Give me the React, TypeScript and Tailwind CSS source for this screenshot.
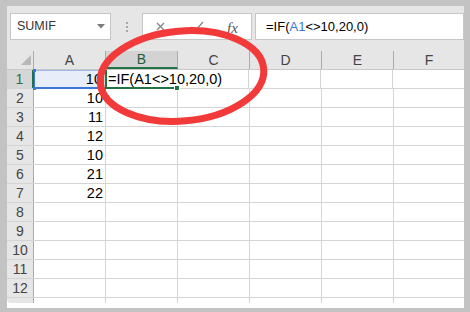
import React from "react";

const COLS = ["A", "B", "C", "D", "E", "F"];
const WIDTHS = [72, 72, 72, 72, 72, 70];
const VALUES = ["10", "10", "11", "12", "10", "21", "22", "", "", "", "", ""];

function HeaderRow() {
  return (
    <div className="flex h-[19px] bg-[#e6e6e6] border-b border-[#c8c8c8]">
      <div className="w-[27px] shrink-0 border-r border-[#ababab] relative">
        <svg className="absolute left-0 top-0" width="27" height="19" viewBox="0 0 27 19">
          <polygon points="14,14 24,14 24,4" fill="#b8b8b8" />
        </svg>
      </div>
      {COLS.map((c, i) => (
        <div
          key={c}
          style={{ width: WIDTHS[i] }}
          className={
            c === "B"
              ? "shrink-0 flex items-center justify-center bg-[#d3d3d3] border-r border-[#ababab] border-b-2 border-b-[#217346] text-[#1d5e38] text-[14px] leading-none"
              : "shrink-0 flex items-center justify-center border-r border-[#ababab] text-[#444] text-[14px] leading-none last:border-r-0"
          }
        >
          {c}
        </div>
      ))}
    </div>
  );
}

function Row({ n }: { n: number }) {
  const first = n === 1;
  return (
    <div className="flex h-[19px] border-b border-[#d4d4d4]">
      <div
        className={
          first
            ? "w-[27px] shrink-0 flex items-center justify-center bg-[#d6d6d6] border-r-2 border-[#217346] text-[#217346] text-[14px] leading-none"
            : "w-[27px] shrink-0 flex items-center justify-center bg-[#e6e6e6] border-r border-[#ababab] text-[#444] text-[14px] leading-none"
        }
      >
        {n}
      </div>
      {COLS.map((c, i) => {
        if (first && c === "A") {
          return (
            <div
              key={c}
              style={{ width: WIDTHS[i] - 1 }}
              className="shrink-0 relative bg-[#e8eef9] border-r border-[#d4d4d4] flex items-center justify-end pr-[2px] text-[14.5px] text-black leading-none"
            >
              <div className="absolute left-0 top-0 right-0 bottom-[-1px] border border-[#3d78d6] border-b-2 border-t-[#9db8e6]" />
              <div className="absolute left-[-1px] top-[-1px] w-[3px] h-[3px] bg-[#3d78d6]" />
              <div className="absolute right-[-2px] top-[-1px] w-[3px] h-[3px] bg-[#3d78d6]" />
              <div className="absolute left-[-1px] bottom-[-2px] w-[3px] h-[3px] bg-[#3d78d6]" />
              <div className="absolute right-[-2px] bottom-[-2px] w-[3px] h-[3px] bg-[#3d78d6]" />
              <span className="relative">{VALUES[0]}</span>
            </div>
          );
        }
        if (first && c === "B") {
          return (
            <div
              key={c}
              style={{ width: WIDTHS[i] }}
              className="shrink-0 relative flex items-center pl-[3px] text-[14.5px] text-black leading-none whitespace-nowrap"
            >
              <div className="absolute left-0 top-0 right-[-1px] bottom-[-1px] border-l-2 border-b-2 border-[#217346]" />
              <div className="absolute right-[-3px] bottom-[-3px] w-[6px] h-[6px] bg-[#217346] border border-white" />
              <span className="relative">=IF(A1&lt;&gt;10,20,0)</span>
            </div>
          );
        }
        return (
          <div
            key={c}
            style={{ width: WIDTHS[i] }}
            className="shrink-0 border-r border-[#d4d4d4] last:border-r-0 flex items-center justify-end pr-[2px] text-[14.5px] text-black leading-none"
          >
            {c === "A" ? VALUES[n - 1] : ""}
          </div>
        );
      })}
    </div>
  );
}

export default function App() {
  return (
    <div
      className="relative w-[470px] h-[312px] bg-[#c3c3c3] pl-[7px] pt-[6px] pr-[6px] pb-[4px] overflow-hidden"
      style={{ fontFamily: '"Liberation Sans", Arial, sans-serif' }}
    >
      <div className="w-full h-full bg-white flex flex-col">
        {/* toolbar */}
        <div className="h-[45px] bg-[#e6e6e6] flex items-start pt-[7px] pl-[3px] shrink-0">
          <div className="w-[101px] h-[27px] bg-white border border-[#c6c6c6] flex items-center justify-between pl-[6px] pr-[5px]">
            <span className="text-[12.5px] text-[#333]">SUMIF</span>
            <svg width="8" height="5" viewBox="0 0 8 5">
              <polygon points="0,0 8,0 4,4.5" fill="#7a7a7a" />
            </svg>
          </div>
          <div className="w-[31px] h-[27px] flex flex-col items-center justify-center gap-[2px]">
            <div className="w-[2px] h-[2px] bg-[#a8a8a8]" />
            <div className="w-[2px] h-[2px] bg-[#a8a8a8]" />
            <div className="w-[2px] h-[2px] bg-[#a8a8a8]" />
          </div>
          <div className="w-[110px] h-[27px] bg-white border border-[#c6c6c6] relative flex items-center">
            <svg className="absolute left-0 top-0" width="108" height="25" viewBox="0 0 108 25">
              <line x1="14" y1="9" x2="21" y2="16" stroke="#8a8a8a" strokeWidth="1.4" />
              <line x1="21" y1="9" x2="14" y2="16" stroke="#8a8a8a" strokeWidth="1.4" />
              <polyline points="48,13 52,17 60,8" fill="none" stroke="#8a8a8a" strokeWidth="1.4" />
            </svg>
            <span
              className="absolute left-[84px] top-[3px] text-[15px] italic text-[#555]"
              style={{ fontFamily: '"Liberation Serif", "Times New Roman", serif' }}
            >
              fx
            </span>
          </div>
          <div className="flex-1 ml-[3px] h-[27px] bg-white border border-[#c6c6c6] flex items-center pl-[10px] text-[13px] text-black">
            <span>=IF(</span>
            <span className="text-[#3a78d6]">A1</span>
            <span>&lt;&gt;10,20,0)</span>
          </div>
        </div>
        {/* grid */}
        <HeaderRow />
        {Array.from({ length: 12 }, (_, i) => (
          <Row key={i} n={i + 1} />
        ))}
        <div className="flex h-[5px]">
          <div className="w-[27px] shrink-0 bg-[#e6e6e6] border-r border-[#ababab] rounded-bl-[4px]" />
          {WIDTHS.map((w, i) => (
            <div key={i} style={{ width: w }} className="shrink-0 border-r border-[#d4d4d4] last:border-r-0" />
          ))}
        </div>
      </div>
      {/* red hand-drawn circle */}
      <svg className="absolute left-0 top-0 pointer-events-none" width="470" height="312" viewBox="0 0 470 312">
        <ellipse
          cx="182"
          cy="76"
          rx="82"
          ry="45"
          transform="rotate(-5 182 76)"
          fill="none"
          stroke="#f23a3a"
          strokeWidth="7"
        />
      </svg>
    </div>
  );
}
